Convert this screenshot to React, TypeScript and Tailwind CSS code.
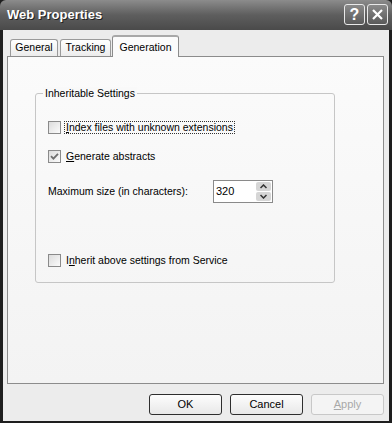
import React from "react";

const font = { fontFamily: '"Liberation Sans", Arial, sans-serif' };

function CheckBox({ checked }: { checked?: boolean }) {
  return (
    <div className="w-[13px] h-[13px] border border-[#8a8a8a] bg-gradient-to-br from-[#dcdcdc] to-[#fbfbfb] flex items-center justify-center shrink-0">
      {checked && (
        <svg width="9" height="9" viewBox="0 0 9 9">
          <path d="M1 4.2 L3.4 6.6 L8 1.8" stroke="#6e6e6e" strokeWidth="1.8" fill="none" />
        </svg>
      )}
    </div>
  );
}

function TitleBtn({ children }: { children: React.ReactNode }) {
  return (
    <div className="w-[21px] h-[21px] rounded-[3px] border border-[#e8e8e8] bg-gradient-to-b from-[#8a8a8a] to-[#5a5a5a] flex items-center justify-center">
      {children}
    </div>
  );
}

function Btn({ label, disabled, u }: { label: string; disabled?: boolean; u?: boolean }) {
  return (
    <div
      className={
        "w-[73px] h-[21px] rounded-[3px] flex items-center justify-center text-[11px] " +
        (disabled
          ? "border border-[#c8c8c8] bg-[#f4f4f4] text-[#a8a8a8]"
          : "border border-[#2e2e2e] bg-gradient-to-b from-[#fdfdfd] to-[#e8e8e8] text-black")
      }
    >
      {u ? (
        <span>
          <span className="underline">{label[0]}</span>
          {label.slice(1)}
        </span>
      ) : (
        label
      )}
    </div>
  );
}

export default function App() {
  return (
    <div className="w-[392px] h-[423px] bg-[#1e1e1e] flex flex-col overflow-hidden" style={font}>
      {/* Title bar */}
      <div className="h-[30px] shrink-0 bg-gradient-to-b from-[#8c8c8c] via-[#5e5e5e] to-[#4a4a4a] flex items-center pl-[7px] pr-[4px] rounded-t-[6px]">
        <span
          className="text-white font-bold text-[13px] flex-1"
          style={{ textShadow: "1px 1px 0 #222" }}
        >
          Web Properties
        </span>
        <div className="flex gap-[2px] mt-[-1px]">
          <TitleBtn>
            <span className="text-white font-bold text-[16px] leading-none">?</span>
          </TitleBtn>
          <TitleBtn>
            <svg width="13" height="13" viewBox="0 0 13 13">
              <path d="M2 2 L11 11 M11 2 L2 11" stroke="white" strokeWidth="2.2" />
            </svg>
          </TitleBtn>
        </div>
      </div>

      {/* Body */}
      <div className="flex-1 mx-[3px] mb-[2px] bg-[#ececec] flex flex-col pl-[4px] pr-[5px] pt-[5px]">
        {/* Tabs */}
        <div className="h-[21px] flex items-end pl-[3px] text-[10.5px] text-black relative z-10">
          <div className="w-[48px] h-[17px] border border-b-0 border-[#9a9a9a] rounded-t-[3px] bg-gradient-to-b from-[#ffffff] to-[#ececec] flex items-center justify-center">
            General
          </div>
          <div className="w-[51px] h-[17px] ml-[2px] border border-b-0 border-[#9a9a9a] rounded-t-[3px] bg-gradient-to-b from-[#ffffff] to-[#ececec] flex items-center justify-center">
            Tracking
          </div>
          <div className="w-[67px] h-[22px] ml-[1px] -mb-px border border-b-0 border-[#8c8c8c] rounded-t-[3px] bg-[#fbfbfb] flex items-start justify-center pt-[3px] border-t-2 border-t-[#a8a8a8]">
            Generation
          </div>
        </div>

        {/* Panel */}
        <div className="h-[328px] border border-[#8c8c8c] bg-gradient-to-b from-[#fbfbfb] to-[#f3f3f3] pl-[27px] pt-[36px] text-[10.5px] text-black">
          <div className="relative w-[300px] h-[190px] border border-[#c6c6c6] rounded-[3px] pl-[12px] pt-[27px]">
            <div className="absolute left-[7px] top-[-7px] px-[2px] bg-[#f9f9f9] leading-[13px]">
              Inheritable Settings
            </div>
            <div className="flex items-center h-[13px]">
              <CheckBox />
              <span className="ml-[3px] px-[1px] border border-dotted border-[#333] leading-[11px]">
                <span className="underline">I</span>ndex files with unknown extensions
              </span>
            </div>
            <div className="flex items-center h-[13px] mt-[16px]">
              <CheckBox checked />
              <span className="ml-[4px] px-[1px]">
                <span className="underline">G</span>enerate abstracts
              </span>
            </div>
            <div className="flex items-center mt-[17px] h-[23px]">
              <span className="w-[165px]">Maximum size (in characters):</span>
              <div className="w-[60px] h-[23px] border border-[#8a8a8a] bg-white flex items-center pl-[2px] pr-[1px]">
                <span className="flex-1 text-[11px]">320</span>
                <div className="flex flex-col gap-[1px]">
                  <div className="w-[15px] h-[9px] rounded-[2px] bg-[#d6d6d6] flex items-center justify-center">
                    <svg width="7" height="5" viewBox="0 0 7 5">
                      <path d="M0.5 4 L3.5 1 L6.5 4" stroke="#333" strokeWidth="1.5" fill="none" />
                    </svg>
                  </div>
                  <div className="w-[15px] h-[9px] rounded-[2px] bg-[#d6d6d6] flex items-center justify-center">
                    <svg width="7" height="5" viewBox="0 0 7 5">
                      <path d="M0.5 1 L3.5 4 L6.5 1" stroke="#333" strokeWidth="1.5" fill="none" />
                    </svg>
                  </div>
                </div>
              </div>
            </div>
            <div className="flex items-center h-[13px] mt-[51px]">
              <CheckBox />
              <span className="ml-[4px] px-[1px]">
                I<span className="underline">n</span>herit above settings from Service
              </span>
            </div>
          </div>
        </div>

        {/* Buttons */}
        <div className="flex justify-end gap-[8px] mt-[10px]">
          <Btn label="OK" />
          <Btn label="Cancel" />
          <Btn label="Apply" disabled u />
        </div>
      </div>
    </div>
  );
}
